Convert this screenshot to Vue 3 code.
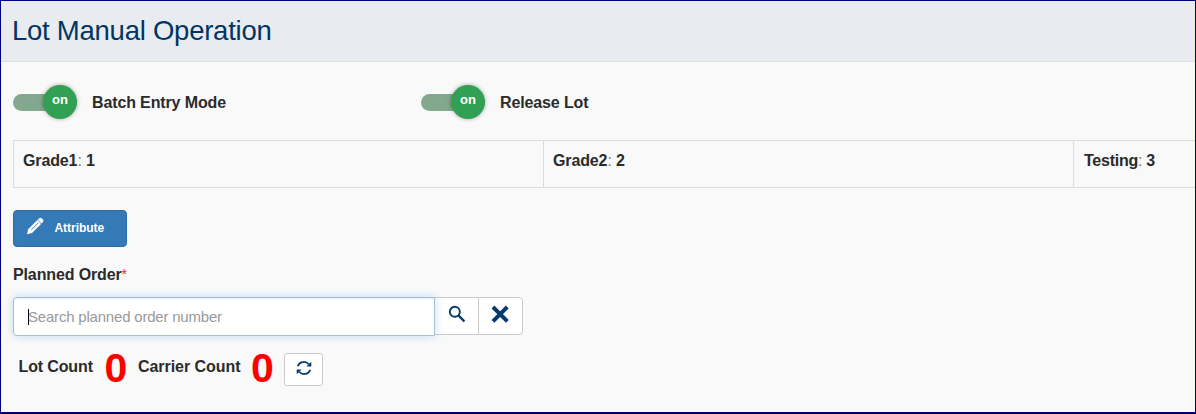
<script setup>
const toggles = ['Batch Entry Mode', 'Release Lot']
const grades = [
  { name: 'Grade1', value: 1 },
  { name: 'Grade2', value: 2 },
  { name: 'Testing', value: 3 },
]
</script>

<template>
  <div class="frame">
    <main class="page">
      <header class="header"><h1>Lot Manual Operation</h1></header>

      <section class="toggles">
        <div v-for="label in toggles" :key="label" class="toggle">
          <span class="track"><span class="thumb">on</span></span>
          <b class="label">{{ label }}</b>
        </div>
      </section>

      <section class="grades">
        <div v-for="g in grades" :key="g.name" class="grade">
          <b>{{ g.name }}</b><span class="colon">:</span>&nbsp;<b>{{ g.value }}</b>
        </div>
      </section>

      <button class="attribute">
        <svg width="18" height="18" viewBox="0 0 18 18">
          <path d="M1 17.2 L2.2 12.2 L11.3 3.1 L15.1 6.9 L6 16 Z" fill="#fff" />
          <path d="M11.7 2.7 L13.2 1.2 Q14.4 .3 15.6 1.2 L17 2.6 Q17.9 3.8 17 5 L15.5 6.5 Z" fill="#fff" />
          <path d="M5.2 13 L12.2 6" stroke="#337ab7" stroke-width=".9" />
        </svg>
        <span>Attribute</span>
      </button>

      <label class="field-label">Planned Order<span class="star">*</span></label>
      <div class="search">
        <div class="input"><span class="caret"></span><span class="placeholder">Search planned order number</span></div>
        <button class="addon find">
          <svg width="18" height="18" viewBox="0 0 18 18" fill="none" stroke="#043a70">
            <circle cx="6.8" cy="6.8" r="5" stroke-width="1.9" />
            <path d="M10.4 10.4 L16.4 16.4" stroke-width="2.3" />
          </svg>
        </button>
        <button class="addon clear">
          <svg width="18" height="18" viewBox="0 0 18 18">
            <path d="M3.4 3.4 L14.9 14.9 M14.9 3.4 L3.4 14.9" fill="none" stroke="#043a70" stroke-width="4" stroke-linecap="square" stroke-linejoin="round" />
          </svg>
        </button>
      </div>

      <section class="counts">
        <b class="lot">Lot Count</b><b class="number">0</b>
        <b class="carrier">Carrier Count</b><b class="number">0</b>
        <button class="refresh">
          <svg width="16" height="16" viewBox="0 0 16 16">
            <path d="M1.8 6.2 A6.2 5.6 0 0 1 12.8 4.2 M14.2 9.8 A6.2 5.6 0 0 1 3.2 11.8" fill="none" stroke="#043a70" stroke-width="1.7" />
            <path d="M15.3 1.7 V6.5 H10.4 Z M.7 14.3 V9.5 H5.6 Z" fill="#043a70" />
          </svg>
        </button>
      </section>
    </main>
  </div>
</template>

<style>
body { margin: 0; }
</style>

<style scoped>
* { box-sizing: border-box; }
.frame {
  width: 1196px;
  height: 414px;
  border-bottom: 1px solid #000;
  font-family: "Liberation Sans", Arial, sans-serif;
  font-size: 16px;
  line-height: 20px;
  letter-spacing: -.13px;
  color: #2b2b2b;
}
.page {
  height: 413px;
  border: 1px solid #000080;
  background: #f9f9f9;
  overflow: hidden;
}
.header {
  height: 61px;
  padding: 14px 11px 0;
  background: #e8ebf0;
  border-bottom: 1px solid #dcdee5;
}
h1 {
  margin: 0;
  font-size: 27.5px;
  line-height: 32px;
  letter-spacing: -.25px;
  font-weight: 400;
  color: #003663;
}
.toggles { display: flex; padding: 23px 0 0 12px; height: 77px; }
.toggle { display: flex; align-items: flex-start; width: 408px; }
.track {
  display: flex;
  justify-content: flex-end;
  align-items: flex-start;
  width: 64px;
  height: 17px;
  margin-top: 9px;
  border-radius: 9px;
  background: #82a98d;
}
.thumb {
  flex: none;
  width: 34px;
  height: 34px;
  margin-top: -9px;
  border-radius: 50%;
  background: #31a052;
  color: #fff;
  text-align: center;
  font-size: 13px;
  font-weight: 700;
  line-height: 30px;
  letter-spacing: 0;
  box-shadow: 0 0 4px rgba(0, 0, 0, .35);
}
.label { margin: 8px 0 0 15px; }
.grades {
  display: flex;
  width: 1592px;
  height: 49px;
  margin: 0 0 0 12px;
  padding-top: 1px;
}
.grade {
  width: 531px;
  height: 48px;
  margin-right: -1px;
  padding: 10px 9px 0;
  border: 1px solid #ddd;
}
.grade:last-child { padding-left: 10px; letter-spacing: -.25px; }
.colon { color: #777; }
button { font-family: inherit; margin: 0; }
.attribute {
  display: flex;
  align-items: flex-start;
  width: 114px;
  height: 37px;
  margin: 22px 0 0 12px;
  padding: 6px 0 0 12px;
  border: 1px solid #2e6da4;
  border-radius: 4px;
  background: #337ab7;
  color: #fff;
  font-size: 12px;
  font-weight: 700;
  line-height: 16px;
  letter-spacing: -.05px;
}
.attribute span { margin: 3px 0 0 10.5px; }
.field-label { display: block; margin: 18px 0 0 12px; font-weight: 700; }
.star { color: #f02030; font-size: 14px; font-weight: 400; line-height: 10px; vertical-align: 1px; }
.search { display: flex; margin: 12px 0 0 12px; }
.input {
  display: flex;
  position: relative;
  width: 422px;
  height: 39px;
  padding: 9px 14px;
  border: 1px solid #a4bfd8;
  border-radius: 4px 0 0 4px;
  background: #fff;
  box-shadow: inset 0 1px 1px rgba(0, 0, 0, .075), 0 0 8px rgba(102, 175, 233, .4);
  color: #999;
  font-size: 15px;
  letter-spacing: -.2px;
}
.caret { width: 1px; height: 16px; margin: 2px -1px 0 0; background: #000; }
.addon { height: 38px; padding: 0; border: 1px solid #ccc; background: #fff; }
.addon svg, .refresh svg { display: block; }
.find { width: 45px; margin-left: -1px; padding: 0 0 4px 13px; }
.clear { width: 45px; margin-left: -1px; padding: 0 0 4px 12px; border-radius: 0 4px 4px 0; }
.counts { display: flex; height: 45px; padding: 12px 0 0 17.5px; }
.counts > b { margin-top: 9px; white-space: nowrap; }
.counts > .lot { width: 75px; }
.counts > .carrier { width: 102px; letter-spacing: -.05px; }
.counts > .number {
  width: 22px;
  margin: 0 11.5px 0 11px;
  color: #f00;
  font-size: 41px;
  line-height: 41px;
  letter-spacing: 0;
}
.refresh {
  width: 39px;
  height: 33px;
  margin: 5px 0 0 -1px;
  padding: 0 0 3px 11px;
  border: 1px solid #ccc;
  border-radius: 3px;
  background: #fff;
}
</style>
